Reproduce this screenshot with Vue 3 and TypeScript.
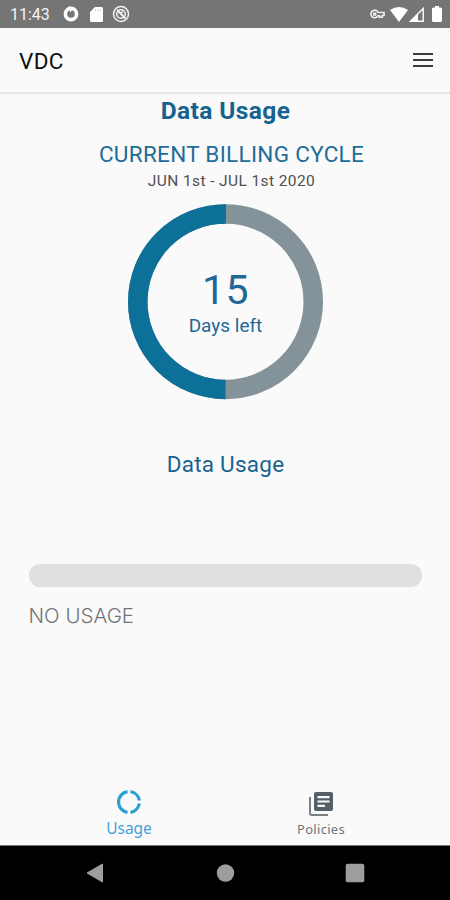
<script setup lang="ts">
import { ref } from 'vue'

const daysLeft = ref<number>(15)
const cycleDays = 30
const radius = 87.75
const circumference = 2 * Math.PI * radius
const remaining = (daysLeft.value / cycleDays) * circumference
</script>

<template>
  <div class="screen">
    <header class="status">
      <span class="clock">11:43</span>
      <svg class="s-ring" viewBox="0 0 16 16"><circle cx="8" cy="8" r="5.6" fill="none" stroke="#fff" stroke-width="3.6" /><path d="M6 0l4.600 2.6L7 6.500z" fill="#fff" /></svg>
      <svg class="s-card" viewBox="0 0 13 15"><path d="M5 0h6.500Q13 0 13 1.500v12q0 1.500-1.500 1.500h-10Q0 15 0 13.500V5z" fill="#fff" /><path d="M5.500 2v2M8 2v2M10.500 2v2" stroke="#ccc" stroke-width="1" /></svg>
      <svg class="s-sync" viewBox="0 0 18 18" fill="none" stroke="#f4f4f4"><circle cx="9" cy="9" r="7.500" stroke-width="1.500" /><circle cx="9" cy="9" r="4.300" stroke-width="1.500" /><path d="M5 5l8.500 8.500M8 8l3-1" stroke-width="1.800" /></svg>
      <span class="grow"></span>
      <svg class="s-key" viewBox="0 0 16 10" fill="none" stroke="#f4f4f4" stroke-width="1.600"><path d="M8.500 3.200A4 4 0 1 0 8.500 6.800H10V8.500h3V6.600h2V3.300z" /><circle cx="5" cy="5" r="1.200" /></svg>
      <svg class="s-wifi" viewBox="0 0 18 15"><path d="M0 3Q9-3 18 3L9 15z" fill="#fff" /></svg>
      <svg class="s-cell" viewBox="0 0 15 15"><path d="M1.500 14.200L14.200 1.500V14.200z" fill="none" stroke="#fff" stroke-width="1.400" /><path d="M1 14.500L9 6.500v8z" fill="#fff" /></svg>
      <svg class="s-batt" viewBox="0 0 10 16"><path d="M3 0h4v1.500h1.500Q10 1.500 10 3v11.500q0 1.500-1.500 1.500h-7Q0 16 0 14.500V3Q0 1.500 1.500 1.500H3z" fill="#fff" /></svg>
    </header>

    <div class="appbar">
      <span class="brand">VDC</span>
      <button class="menu" aria-label="Menu"><i></i><i></i><i></i></button>
    </div>

    <main class="content">
      <h1 class="title">Data Usage</h1>
      <h2 class="cycle">CURRENT BILLING CYCLE</h2>
      <p class="dates">JUN 1st - JUL 1st 2020</p>
      <div class="dial">
        <svg class="dial-ring" viewBox="0 0 196 196" fill="none" stroke-width="19.500">
          <circle cx="98.500" cy="97.700" :r="radius" stroke="#84929a" />
          <circle cx="98.500" cy="97.700" :r="radius" stroke="#0c7099" :stroke-dasharray="`${remaining} ${circumference}`" transform="rotate(90 98.500 97.700)" />
        </svg>
        <div class="dial-text">
          <span class="number">{{ daysLeft }}</span>
          <span class="days">Days left</span>
        </div>
      </div>
      <h3 class="section">Data Usage</h3>
      <div class="bar"></div>
      <p class="none">NO USAGE</p>
    </main>

    <nav class="tabs">
      <a class="tab active">
        <svg class="t-usage" viewBox="0 0 24 24" fill="none" stroke="#2da0d2" stroke-width="3.200"><path d="M10.500 1.700A10.400 10.400 0 0 0 10.500 22.300M13.500 1.700A10.400 10.400 0 0 1 22.300 10.500M22.300 13.500A10.400 10.400 0 0 1 13.500 22.300" /></svg>
        <span>Usage</span>
      </a>
      <a class="tab">
        <svg class="t-policies" viewBox="0 0 24 24"><path d="M1 5v16q0 2 2 2h16" fill="none" stroke="#788184" stroke-width="2" /><path d="M7 0h15q2 0 2 2v15q0 2-2 2H7q-2 0-2-2V2q0-2 2-2zM8.500 4v2.200h12V4zm0 4.400v2.200h12V8.400zm0 4.400V15h7.500v-2.200z" fill="#536167" fill-rule="evenodd" /></svg>
        <span>Policies</span>
      </a>
    </nav>

    <footer class="sysnav">
      <svg viewBox="0 0 20 20"><path d="M1 10L16.500 1v18z" fill="#9d9d9d" stroke="#9d9d9d" stroke-linejoin="round" /></svg>
      <svg viewBox="0 0 20 20"><circle cx="10.500" cy="10" r="8.700" fill="#9d9d9d" /></svg>
      <svg viewBox="0 0 20 20"><rect x=".7" y=".7" width="18.600" height="18.600" rx="2" fill="#9d9d9d" /></svg>
    </footer>
  </div>
</template>

<style>
body { margin: 0; background: #fafafa; }
</style>

<style scoped>
.screen { width: 450px; height: 900px; display: flex; flex-direction: column; background: #fafafa; font-family: Roboto, sans-serif; overflow: hidden; }
svg { display: block; flex: none; }
h1, h2, h3, p { margin: 0; font-weight: 400; }
.status { box-sizing: border-box; height: 28px; flex: none; display: flex; align-items: center; padding: 0 8px 0 10px; background: #757575; color: #f4f4f4; }
.clock { width: 53px; font-size: 16px; line-height: 28px; padding-top: 1px; }
.grow { flex: 1; }
.s-ring { width: 16px; height: 16px; }
.s-card { width: 13px; height: 15px; margin-left: 11px; }
.s-sync { width: 18px; height: 18px; margin-left: 9px; }
.s-key { width: 15px; height: 10px; margin-right: 5px; }
.s-wifi { width: 18px; height: 15px; margin-right: 1px; }
.s-cell { width: 15px; height: 15px; margin-right: 8px; }
.s-batt { width: 10px; height: 16px; }
.appbar { box-sizing: border-box; height: 66px; flex: none; display: flex; align-items: center; justify-content: space-between; padding: 0 17px 0 19px; border-bottom: 2px solid #e6e6e6; }
.brand { font-size: 22.5px; line-height: 28px; letter-spacing: .3px; color: #111; padding-top: 2px; }
.menu { width: 20px; padding: 0; border: 0; background: none; display: flex; flex-direction: column; gap: 4px; }
.menu i { height: 2px; background: #3d3d3f; }
.content { height: 690px; flex: none; display: flex; flex-direction: column; }
.title, .cycle, .dates, .section { text-align: center; color: #17638f; }
.title { font-size: 24.500px; line-height: 28px; font-weight: 700; padding: 3px 0 0 1px; letter-spacing: .4px; }
.cycle { font-size: 22.500px; line-height: 26px; margin-top: 16px; padding-left: 13px; letter-spacing: .3px; color: #1d6c99; }
.dates { font-size: 15.500px; line-height: 20px; margin-top: 4px; padding-left: 13px; letter-spacing: .4px; color: #505050; }
.dial { width: 196px; height: 196px; margin: 13px 0 0 127px; display: grid; }
.dial-ring, .dial-text { grid-area: 1 / 1; }
.dial-ring { width: 196px; height: 196px; }
.dial-text { display: flex; flex-direction: column; align-items: center; padding: 62px 0 0 1px; color: #1f6896; }
.number { font-size: 41px; line-height: 48px; letter-spacing: .5px; }
.days { font-size: 19px; line-height: 22px; margin-top: 1px; }
.section { font-size: 22.500px; line-height: 26px; margin-top: 51px; padding-left: 1px; letter-spacing: .25px; }
.bar { height: 23px; margin: 87px 28px 0 29px; border-radius: 12px; background: #e0e0e0; }
.none { font-family: Inter, sans-serif; font-weight: 300; font-size: 20.500px; line-height: 26px; margin: 16px 0 0 28.500px; color: #707477; }
.tabs { height: 61px; flex: none; display: flex; border-bottom: 1px solid #777; }
.tab { width: 192px; display: flex; flex-direction: column; align-items: center; color: #6b7579; font-family: "Noto Sans", sans-serif; font-size: 13px; line-height: 18px; letter-spacing: .3px; }
.tab.active { color: #45a3d8; font-size: 15.500px; margin-left: 33px; line-height: 20px; letter-spacing: 0; }
.t-usage { width: 24px; height: 24px; margin-top: 6px; margin-bottom: 4px; }
.t-policies { width: 24px; height: 24px; margin-top: 8px; margin-bottom: 4px; }
.sysnav { flex: 1; display: flex; align-items: center; justify-content: center; gap: 109.500px; background: #000; }
.sysnav svg { width: 20px; height: 20px; }
</style>
